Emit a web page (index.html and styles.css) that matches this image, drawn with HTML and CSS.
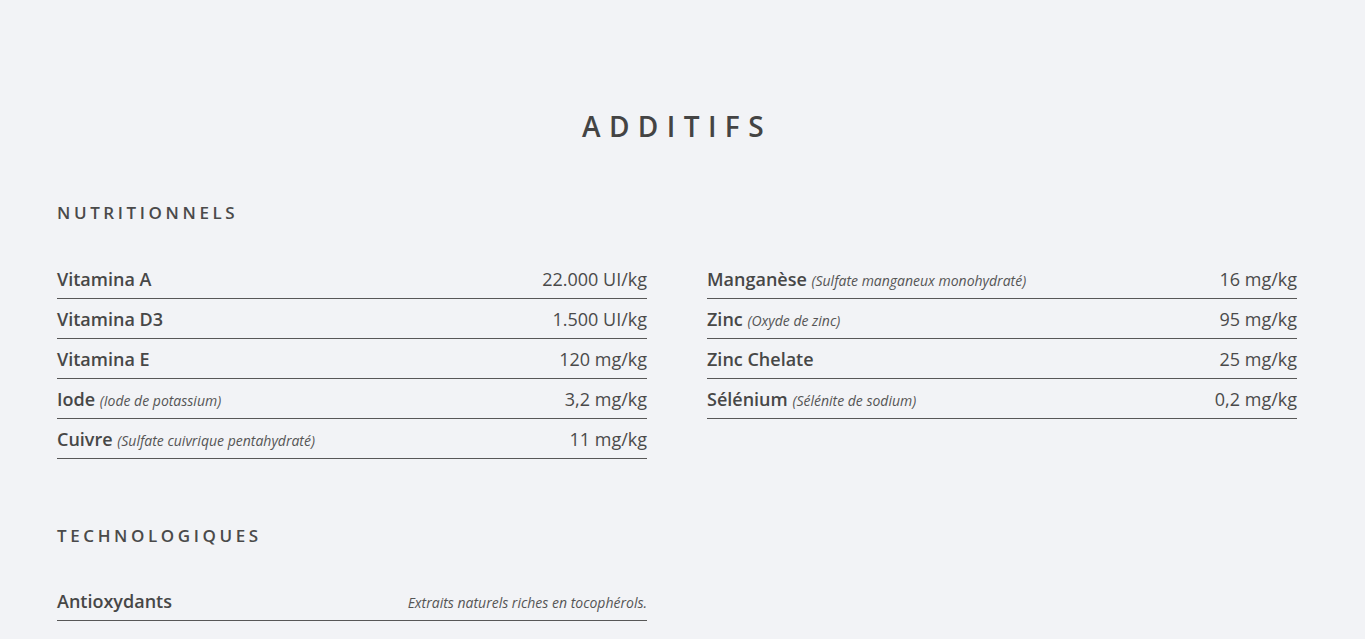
FILE: index.html
```html
<!DOCTYPE html>
<html lang="fr">
<head>
<meta charset="utf-8">
<title>Additifs</title>
<link rel="stylesheet" href="styles.css">
</head>
<body>
<main class="page">
  <h1 class="title">ADDITIFS</h1>

  <section class="section">
    <h2 class="heading">NUTRITIONNELS</h2>
    <div class="grid">
      <ul class="list">
        <li class="row"><span class="name">Vitamina A</span><span class="value">22.000 UI/kg</span></li>
        <li class="row"><span class="name">Vitamina D3</span><span class="value">1.500 UI/kg</span></li>
        <li class="row"><span class="name">Vitamina E</span><span class="value">120 mg/kg</span></li>
        <li class="row"><span class="name">Iode <em class="note">(Iode de potassium)</em></span><span class="value">3,2 mg/kg</span></li>
        <li class="row"><span class="name">Cuivre <em class="note">(Sulfate cuivrique pentahydraté)</em></span><span class="value">11 mg/kg</span></li>
      </ul>
      <ul class="list">
        <li class="row"><span class="name">Manganèse <em class="note">(Sulfate manganeux monohydraté)</em></span><span class="value">16 mg/kg</span></li>
        <li class="row"><span class="name">Zinc <em class="note">(Oxyde de zinc)</em></span><span class="value">95 mg/kg</span></li>
        <li class="row"><span class="name">Zinc Chelate</span><span class="value">25 mg/kg</span></li>
        <li class="row"><span class="name">Sélénium <em class="note">(Sélénite de sodium)</em></span><span class="value">0,2 mg/kg</span></li>
      </ul>
    </div>
  </section>

  <section class="section section-tech">
    <h2 class="heading">TECHNOLOGIQUES</h2>
    <div class="grid">
      <ul class="list">
        <li class="row"><span class="name">Antioxydants</span><em class="note">Extraits naturels riches en tocophérols.</em></li>
      </ul>
    </div>
  </section>
</main>
</body>
</html>
```

FILE: styles.css
```css
html, body {
  margin: 0;
  padding: 0;
  background: #f2f3f6;
}

body {
  font-family: "Open Sans", "Liberation Sans", sans-serif;
  color: #474747;
}

.page {
  width: 1240px;
  padding: 107px 0 0 57px;
}

.title {
  margin: 0;
  font-size: 28px;
  line-height: 38px;
  font-weight: 600;
  letter-spacing: 0.3em;
  text-align: center;
  color: #444;
}

.section {
  margin-top: 57px;
}

.section-tech {
  margin-top: 66px;
}

.heading {
  margin: 0 0 35px;
  font-size: 17px;
  line-height: 22px;
  font-weight: 600;
  letter-spacing: 3.6px;
  color: #4a4a4a;
}

.section-tech .heading {
  margin-bottom: 34px;
}

.grid {
  display: grid;
  grid-template-columns: 590px 590px;
  column-gap: 60px;
  align-items: start;
}

.list {
  list-style: none;
  margin: 0;
  padding: 0;
}

.row {
  box-sizing: border-box;
  height: 40px;
  display: flex;
  justify-content: space-between;
  align-items: baseline;
  padding: 8px 0 7px;
  line-height: 24px;
  border-bottom: 1px solid #575757;
}

.name {
  font-size: 18px;
  font-weight: 600;
  color: #474747;
}

.value {
  font-size: 18px;
  font-weight: 400;
  color: #4a4a4a;
}

.note {
  font-size: 14px;
  line-height: 1;
  font-weight: 400;
  font-style: italic;
  color: #555;
}
```
